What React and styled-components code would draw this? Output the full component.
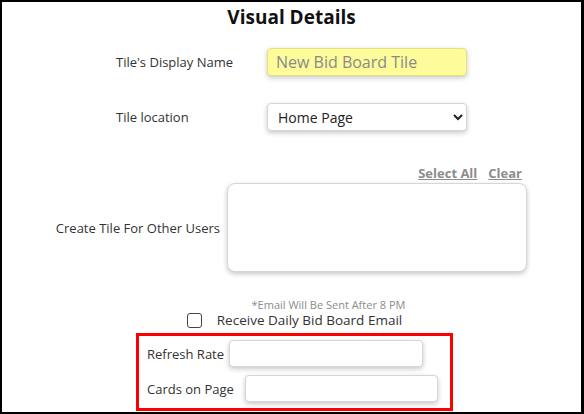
import React from "react"
import styled, { createGlobalStyle } from "styled-components"

const GlobalStyle = createGlobalStyle`
    html, body {
        margin: 0;
        padding: 0;
        background: #fff;
    }
    * {
        box-sizing: border-box;
    }
`;

const Frame = styled.div`
    width: 584px;
    height: 414px;
    border: 2px solid #000;
    border-right-width: 3px;
    font-family: "Open Sans", "Noto Sans", sans-serif;
    color: #333;
    overflow: hidden;
`;

const Title = styled.h2`
    margin: 0;
    padding-top: 4px;
    font-size: 19px;
    font-weight: 700;
    color: #111;
    text-align: center;
    line-height: 22px;
`;

const Row = styled.div`
    display: flex;
    align-items: center;
    justify-content: center;
    margin-top: ${p => p.$top || 0}px;
`;

const Label = styled.label`
    width: ${p => p.$width}px;
    text-align: ${p => p.$align || 'left'};
    font-size: 13px;
    color: #333;
    flex-shrink: 0;
`;

const Field = styled.input`
    width: ${p => p.$width || 200}px;
    height: ${p => p.$height || 28}px;
    border: 1px solid ${p => p.$highlight ? '#e4e27a' : '#d6d6d6'};
    background: ${p => p.$highlight ? '#fdfb9a' : '#fff'};
    border-radius: 4px;
    box-shadow: 0 2px 5px rgba(0, 0, 0, 0.22);
    padding: 0 8px;
    font-family: inherit;
    font-size: 16px;
    color: #333;
    outline: none;
    caret-color: #000;
    &::placeholder {
        color: #8a8a8a;
    }
`;

const Select = styled.select`
    width: 200px;
    height: 28px;
    border: 1px solid #d6d6d6;
    border-radius: 4px;
    box-shadow: 0 2px 5px rgba(0, 0, 0, 0.22);
    padding: 0 6px;
    font-family: inherit;
    font-size: 14px;
    color: #222;
    background: #fff;
    outline: none;
`;

const UsersGrid = styled.div`
    display: grid;
    grid-template-columns: 167px 300px;
    column-gap: 7px;
    justify-content: center;
    align-items: center;
    margin-top: 33px;
    margin-left: -3px;
`;

const Links = styled.div`
    grid-column: 2;
    display: flex;
    justify-content: flex-end;
    gap: 11px;
    padding-right: 5px;
    margin-bottom: 1px;
`;

const LinkText = styled.a`
    font-size: 13px;
    font-weight: 700;
    color: #8c8c8c;
    text-decoration: underline;
    cursor: pointer;
`;

const UsersBox = styled.div`
    grid-column: 2;
    height: 89px;
    border: 1px solid #d6d6d6;
    border-radius: 8px;
    box-shadow: 0 2px 5px rgba(0, 0, 0, 0.22);
    background: #fff;
`;

const Note = styled.div`
    margin-top: 26px;
    padding-left: 74px;
    text-align: center;
    font-size: 11px;
    color: #8c8c8c;
    line-height: 14px;
`;

const CheckRow = styled.label`
    display: flex;
    align-items: center;
    justify-content: center;
    gap: 15px;
    font-size: 13.5px;
    color: #333;
    margin-top: -1px;
    padding-left: 6px;
`;

const Check = styled.span`
    width: 15px;
    height: 15px;
    border: 1.5px solid #444;
    border-radius: 3px;
    display: inline-block;
`;

const RedBox = styled.div`
    width: 317px;
    margin: 4px auto 0;
    position: relative;
    left: 3px;
    border: 3px solid #f00;
    padding: 4px 8px 6px;
    display: flex;
    flex-direction: column;
    gap: 8px;
`;

const BoxRow = styled.div`
    display: flex;
    align-items: center;
`;

const App = () => (
    <Frame>
        <GlobalStyle />
        <Title>Visual Details</Title>
        <Row $top={20}>
            <Label $width={151}>Tile's Display Name</Label>
            <Field $highlight placeholder="New Bid Board Tile" autoFocus />
        </Row>
        <Row $top={27}>
            <Label $width={151}>Tile location</Label>
            <Select defaultValue="home">
                <option value="home">Home Page</option>
            </Select>
        </Row>
        <UsersGrid>
            <Links>
                <LinkText>Select All</LinkText>
                <LinkText>Clear</LinkText>
            </Links>
            <Label $width={167} $align="right">Create Tile For Other Users</Label>
            <UsersBox />
        </UsersGrid>
        <Note>*Email Will Be Sent After 8 PM</Note>
        <CheckRow>
            <Check />
            Receive Daily Bid Board Email
        </CheckRow>
        <RedBox>
            <BoxRow>
                <Label $width={82}>Refresh Rate</Label>
                <Field $width={194} $height={27} />
            </BoxRow>
            <BoxRow>
                <Label $width={98}>Cards on Page</Label>
                <Field $width={193} $height={27} />
            </BoxRow>
        </RedBox>
    </Frame>
);

export default App;
